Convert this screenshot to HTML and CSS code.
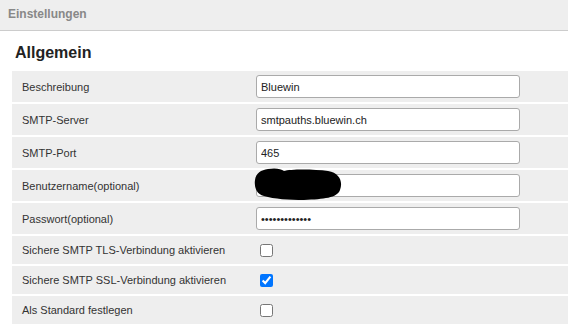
FILE: index.html
```html
<!DOCTYPE html>
<html>
<head>
<meta charset="utf-8">
<link rel="stylesheet" href="styles.css">
</head>
<body>
<div class="topbar">Einstellungen</div>
<div class="section">
  <h2 class="section-title">Allgemein</h2>
  <div class="rows">
    <div class="row">
      <label class="label">Beschreibung</label>
      <div class="field"><input class="text" type="text" value="Bluewin"></div>
    </div>
    <div class="row">
      <label class="label">SMTP-Server</label>
      <div class="field"><input class="text" type="text" value="smtpauths.bluewin.ch"></div>
    </div>
    <div class="row">
      <label class="label">SMTP-Port</label>
      <div class="field"><input class="text" type="text" value="465"></div>
    </div>
    <div class="row">
      <label class="label">Benutzername(optional)</label>
      <div class="field">
        <input class="text" type="text" value="">
        <svg class="redact" viewBox="0 0 88 32" width="88" height="32"><path d="M14 1 C22 -0.5 27 1 30 3 C36 1 60 1 74 3 C86 5 89 14 86 22 C83 30 70 31 50 32 C35 32 20 31 10 28 C2 26 0 18 1 12 C2 5 7 2 14 1 Z" fill="#000"/></svg>
      </div>
    </div>
    <div class="row">
      <label class="label">Passwort(optional)</label>
      <div class="field"><input class="text" type="password" value="abcdefghijklm"></div>
    </div>
    <div class="row check-row">
      <label class="label">Sichere SMTP TLS-Verbindung aktivieren</label>
      <div class="field"><input class="check" type="checkbox"></div>
    </div>
    <div class="row check-row">
      <label class="label">Sichere SMTP SSL-Verbindung aktivieren</label>
      <div class="field"><input class="check" type="checkbox" checked></div>
    </div>
    <div class="row check-row">
      <label class="label">Als Standard festlegen</label>
      <div class="field"><input class="check" type="checkbox"></div>
    </div>
  </div>
</div>
</body>
</html>
```

FILE: styles.css
```css
html, body {
  margin: 0;
  padding: 0;
  background: #fff;
  font-family: "Liberation Sans", Arial, sans-serif;
}

.topbar {
  height: 28px;
  line-height: 28px;
  padding: 0 0 2px 8px;
  background: #eeeeee;
  border-bottom: 1px solid #cccccc;
  color: #888888;
  font-size: 12px;
  font-weight: bold;
}

.section {
  padding-left: 12px;
}

.section-title {
  margin: 0;
  padding: 13px 0 9px 3px;
  font-size: 16px;
  line-height: 18px;
  font-weight: bold;
  color: #222222;
}

.rows {
  display: flex;
  flex-direction: column;
  gap: 2px;
}

.row {
  display: flex;
  align-items: center;
  height: 31px;
  background: #eeeeee;
}

.check-row {
  height: 28px;
}

.label {
  width: 234px;
  padding-left: 10px;
  font-size: 11px;
  color: #333333;
}

.field {
  position: relative;
  display: flex;
  align-items: center;
}

.text {
  box-sizing: border-box;
  width: 264px;
  height: 23px;
  margin: 0;
  padding: 0 4px;
  border: 1px solid #aaaaaa;
  border-radius: 3px;
  background: #fff;
  font-family: "Liberation Sans", Arial, sans-serif;
  font-size: 11px;
  color: #222222;
  outline: none;
}

.check {
  width: 13px;
  height: 13px;
  margin: 0 0 0 4px;
}

.redact {
  position: absolute;
  left: -2px;
  top: -6px;
}
```
